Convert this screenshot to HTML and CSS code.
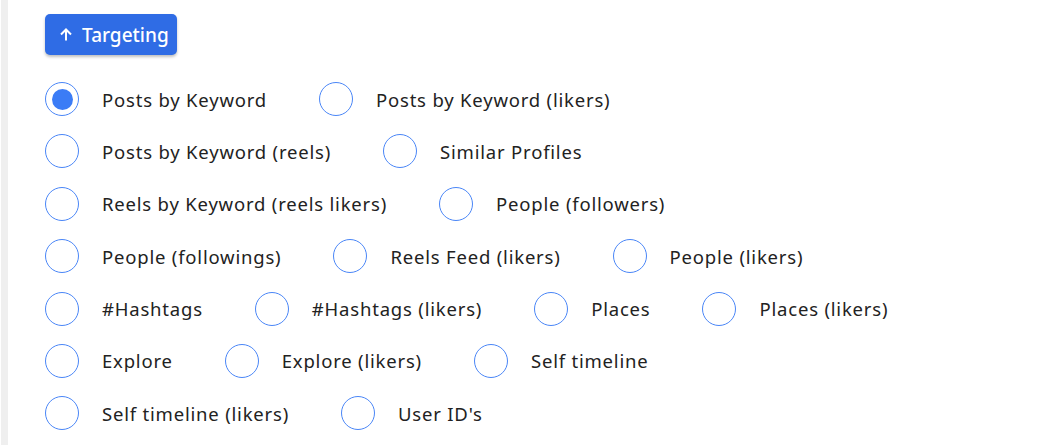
FILE: index.html
```html
<html>
<head>
	<link rel="stylesheet" href="styles.css">
</head>
<body>
	<div class="page">
		<button class="toggle-btn">
			<svg class="arrow" width="12" height="13" viewBox="0 0 12 13"><path d="M6 12.5V1.5M1 6.5L6 1.5L11 6.5" fill="none" stroke="#fff" stroke-width="2"/></svg>
			<span>Targeting</span>
		</button>

		<div class="radio-group">
			<label class="radio-item"><input type="radio" name="target" checked><span class="dot"></span><span class="text">Posts by Keyword</span></label>
			<label class="radio-item"><input type="radio" name="target"><span class="dot"></span><span class="text">Posts by Keyword (likers)</span></label>
			<label class="radio-item"><input type="radio" name="target"><span class="dot"></span><span class="text">Posts by Keyword (reels)</span></label>
			<label class="radio-item"><input type="radio" name="target"><span class="dot"></span><span class="text">Similar Profiles</span></label>
			<label class="radio-item"><input type="radio" name="target"><span class="dot"></span><span class="text">Reels by Keyword (reels likers)</span></label>
			<label class="radio-item"><input type="radio" name="target"><span class="dot"></span><span class="text">People (followers)</span></label>
			<label class="radio-item"><input type="radio" name="target"><span class="dot"></span><span class="text">People (followings)</span></label>
			<label class="radio-item"><input type="radio" name="target"><span class="dot"></span><span class="text">Reels Feed (likers)</span></label>
			<label class="radio-item"><input type="radio" name="target"><span class="dot"></span><span class="text">People (likers)</span></label>
			<label class="radio-item"><input type="radio" name="target"><span class="dot"></span><span class="text">#Hashtags</span></label>
			<label class="radio-item"><input type="radio" name="target"><span class="dot"></span><span class="text">#Hashtags (likers)</span></label>
			<label class="radio-item"><input type="radio" name="target"><span class="dot"></span><span class="text">Places</span></label>
			<label class="radio-item"><input type="radio" name="target"><span class="dot"></span><span class="text">Places (likers)</span></label>
			<label class="radio-item"><input type="radio" name="target"><span class="dot"></span><span class="text">Explore</span></label>
			<label class="radio-item"><input type="radio" name="target"><span class="dot"></span><span class="text">Explore (likers)</span></label>
			<label class="radio-item"><input type="radio" name="target"><span class="dot"></span><span class="text">Self timeline</span></label>
			<label class="radio-item"><input type="radio" name="target"><span class="dot"></span><span class="text">Self timeline (likers)</span></label>
			<label class="radio-item"><input type="radio" name="target"><span class="dot"></span><span class="text">User ID's</span></label>
		</div>
	</div>
</body>
</html>
```

FILE: styles.css
```css
body{
	margin: 0;
	background: #fff;
	font-family: "Noto Sans", "Open Sans", sans-serif;
	color: #222;
}

.page{
	margin-left: 1px;
	border-left: 7px solid #efefef;
	padding: 14px 0 0 37px;
	min-height: 445px;
	box-sizing: border-box;
}

.toggle-btn{
	display: flex;
	align-items: center;
	gap: 10px;
	height: 41px;
	width: 132px;
	padding: 0 0 0 15px;
	border: none;
	border-radius: 5px;
	background: #2f6ce5;
	color: #fff;
	font-family: inherit;
	font-size: 19px;
	font-weight: 500;
	box-shadow: 0 2px 3px rgba(0, 0, 0, 0.25);
}

.radio-group{
	display: flex;
	flex-wrap: wrap;
	column-gap: 52px;
	row-gap: 18.4px;
	width: 880px;
	margin-top: 27px;
}

.radio-item{
	display: flex;
	align-items: center;
	height: 34px;
	font-size: 18.5px;
	letter-spacing: 0.8px;
}
.radio-item input{
	display: none;
}
.radio-item .dot{
	width: 34px;
	height: 34px;
	box-sizing: border-box;
	border: 1.5px solid #4a86f7;
	border-radius: 50%;
	margin-right: 23px;
	display: flex;
	align-items: center;
	justify-content: center;
}
.radio-item input:checked + .dot::after{
	content: "";
	width: 21px;
	height: 21px;
	border-radius: 50%;
	background: #3b7cf6;
}
```
